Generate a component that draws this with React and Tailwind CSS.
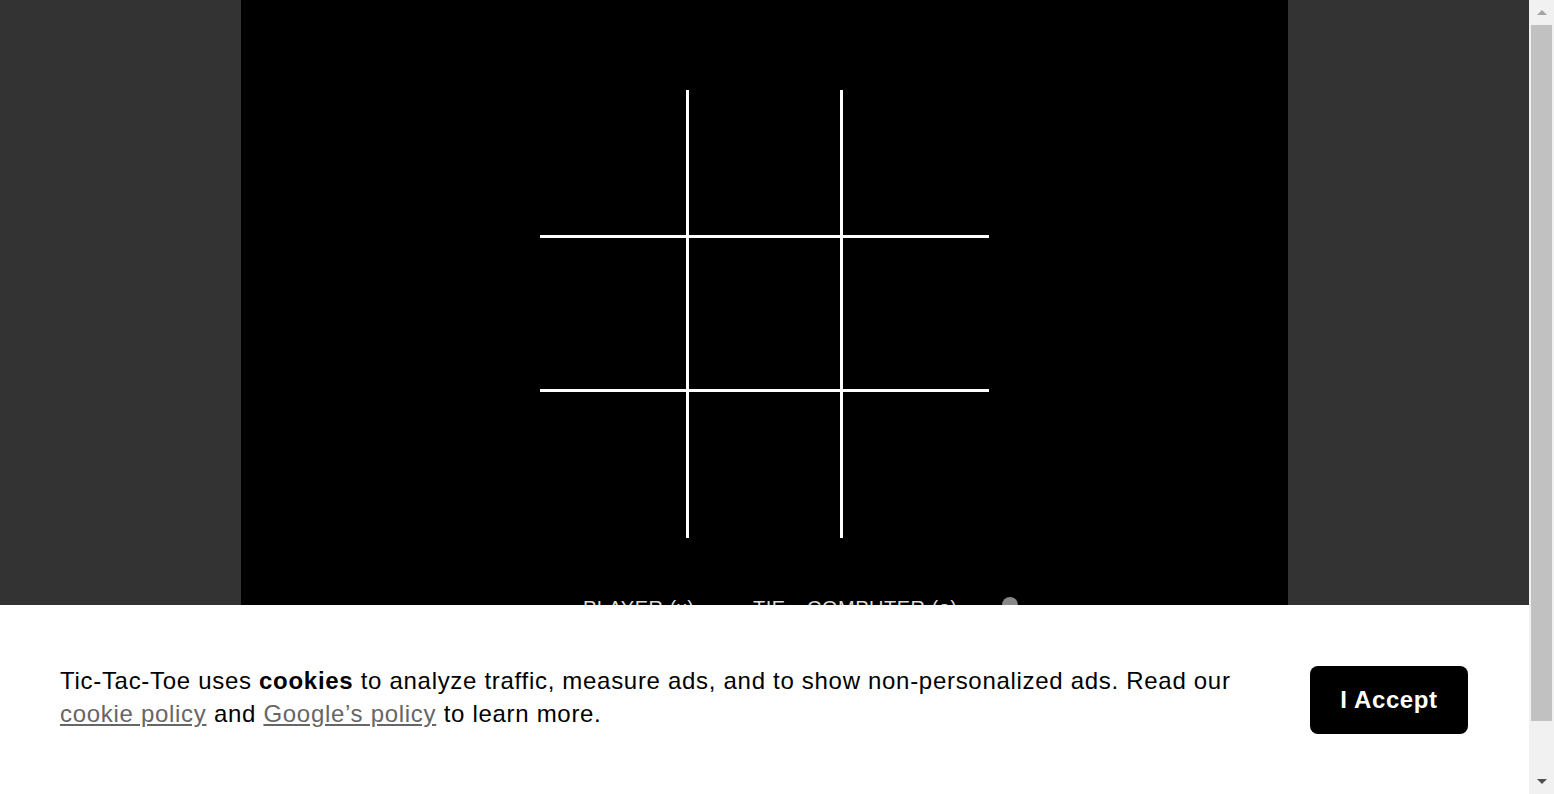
import React from "react";

const cells = Array.from({ length: 9 });

const Board = () => {
  return (
    <div className="grid grid-cols-[146px_151px_146px] grid-rows-[145px_151px_146px] gap-[3px] bg-white">
      {cells.map((_, i) => (
        <div key={i} className="bg-black" />
      ))}
    </div>
  );
};

const Scrollbar = () => {
  return (
    <div className="w-[25px] h-full bg-[#f1f1f1] flex flex-col items-center shrink-0">
      <div className="h-[25px] w-full flex items-center justify-center">
        <div className="w-0 h-0 border-l-[5px] border-r-[5px] border-b-[5px] border-l-transparent border-r-transparent border-b-[#a3a3a3]" />
      </div>
      <div className="w-[21px] h-[696px] bg-[#c1c1c1]" />
      <div className="flex-1 w-full flex items-end justify-center pb-[10px]">
        <div className="w-0 h-0 border-l-[5px] border-r-[5px] border-t-[5px] border-l-transparent border-r-transparent border-t-[#505050]" />
      </div>
    </div>
  );
};

const CookieBanner = () => {
  return (
    <div className="absolute bottom-0 left-0 right-[25px] h-[189px] bg-white flex items-center pl-[60px] pr-[61px] gap-[59px] font-['Liberation_Sans',Arial,sans-serif]">
      <p className="flex-1 mb-[6px] text-[24px] leading-[33px] tracking-[0.7px] text-black">
        Tic-Tac-Toe uses <b>cookies</b> to analyze traffic, measure ads, and to
        show non-personalized ads. Read our{" "}
        <a href="#" className="text-[#666] underline">
          cookie policy
        </a>{" "}
        and{" "}
        <a href="#" className="text-[#666] underline">
          Google’s policy
        </a>{" "}
        to learn more.
      </p>
      <button className="w-[158px] h-[68px] bg-black text-white text-[24px] tracking-[0.6px] font-bold rounded-[8px] shrink-0">
        I Accept
      </button>
    </div>
  );
};

const App = () => {
  return (
    <div className="relative h-[794px] w-full flex overflow-hidden font-['Liberation_Sans',Arial,sans-serif]">
      <div className="flex-1 bg-[#333] flex justify-center">
        <div className="w-[1047px] h-full bg-black flex flex-col items-center pt-[90px]">
          <Board />
          <div className="self-start ml-[342px] mt-[56px] flex items-start text-[20px] leading-[28px] text-[#ddd] tracking-[0.5px]">
            <span className="w-[170px]">PLAYER (x)</span>
            <span className="w-[54px]">TIE</span>
            <span className="w-[195px]">COMPUTER (o)</span>
            <span className="mt-[3px] w-[16px] h-[16px] rounded-full bg-[#888]" />
          </div>
        </div>
      </div>
      <Scrollbar />
      <CookieBanner />
    </div>
  );
};

export default App;
